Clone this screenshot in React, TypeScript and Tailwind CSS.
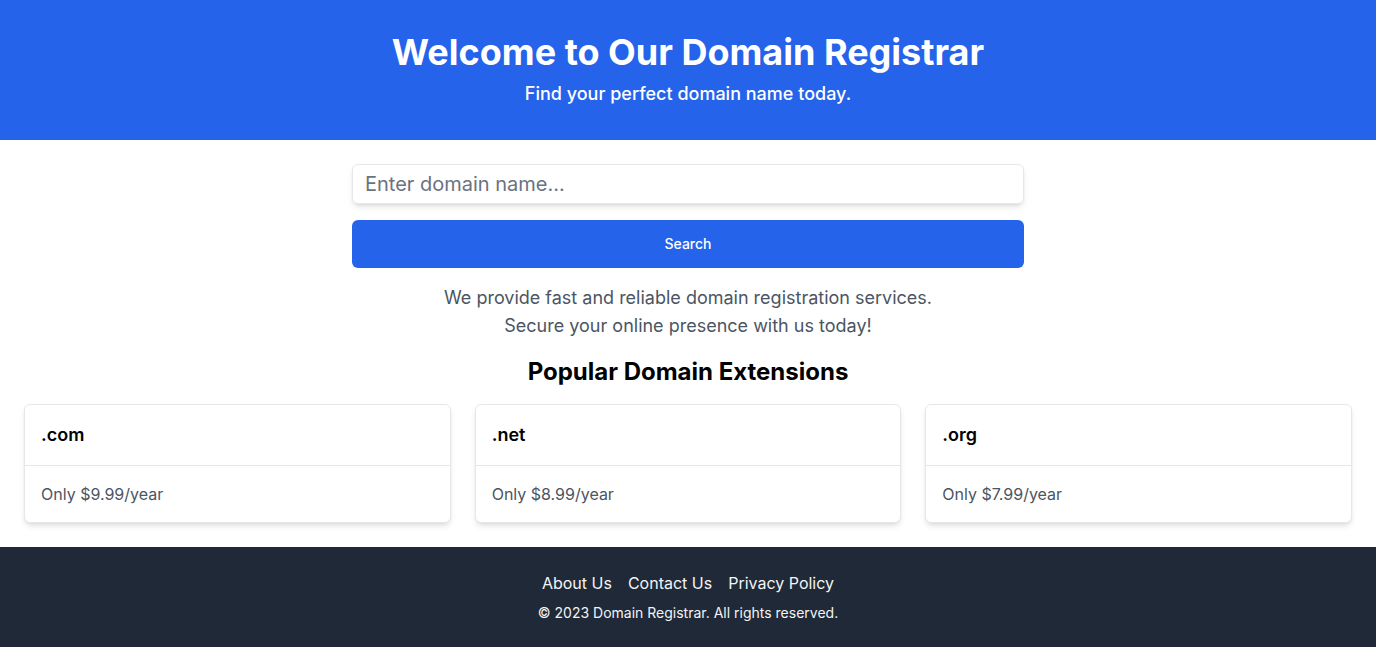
import { useState } from "react";

const extensions = [
  { ext: ".com", price: "$9.99" },
  { ext: ".net", price: "$8.99" },
  { ext: ".org", price: "$7.99" },
];

export default function App() {
  const [domain, setDomain] = useState("");

  return (
    <div className="min-h-screen flex flex-col bg-white font-['Inter',sans-serif]">
      <header className="bg-[#2563eb] py-8 text-center text-white">
        <h1 className="text-4xl font-bold">Welcome to Our Domain Registrar</h1>
        <p className="mt-2 text-lg font-medium">Find your perfect domain name today.</p>
      </header>

      <main className="py-6 px-6">
        <div className="max-w-2xl mx-auto">
          <input
            type="text"
            value={domain}
            onChange={(e) => setDomain(e.target.value)}
            placeholder="Enter domain name..."
            className="w-full h-10 px-3 text-xl border border-[#e5e7eb] rounded-md shadow-md outline-none placeholder:text-[#6b7280]"
          />
          <button className="mt-4 w-full h-12 bg-[#2563eb] text-white text-sm font-medium rounded-md">
            Search
          </button>
        </div>

        <div className="mt-4 text-center text-lg text-[#4b5563]">
          <p>We provide fast and reliable domain registration services.</p>
          <p>Secure your online presence with us today!</p>
        </div>

        <h2 className="mt-4 text-center text-2xl font-bold text-black">
          Popular Domain Extensions
        </h2>

        <div className="mt-4 grid grid-cols-3 gap-6">
          {extensions.map((item) => (
            <div
              key={item.ext}
              className="border border-[#e5e7eb] rounded-md shadow-md bg-white"
            >
              <div className="p-4 border-b border-[#e5e7eb] text-lg font-semibold text-black">
                {item.ext}
              </div>
              <div className="p-4 text-base text-[#4b5563]">Only {item.price}/year</div>
            </div>
          ))}
        </div>
      </main>

      <footer className="bg-[#1f2937] py-6 text-center text-[#f3f4f6]">
        <nav className="flex justify-center gap-4">
          <a href="#">About Us</a>
          <a href="#">Contact Us</a>
          <a href="#">Privacy Policy</a>
        </nav>
        <p className="mt-2 text-sm">© 2023 Domain Registrar. All rights reserved.</p>
      </footer>
    </div>
  );
}
